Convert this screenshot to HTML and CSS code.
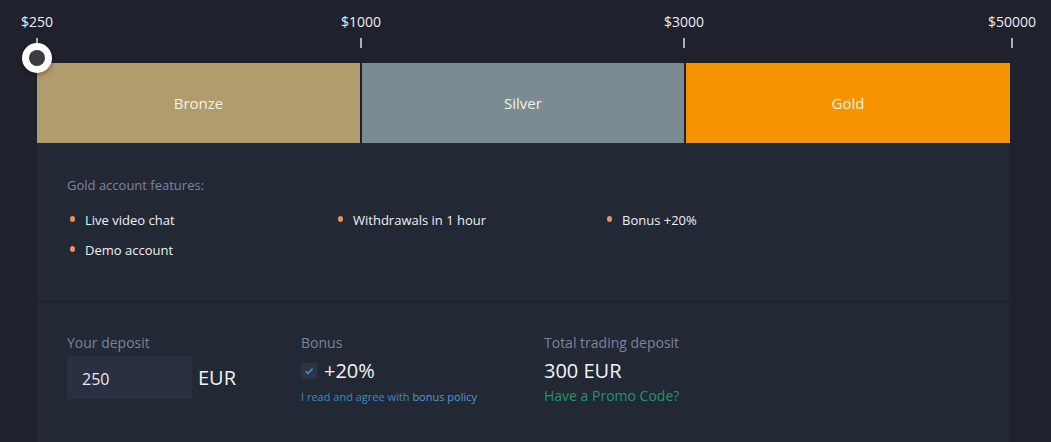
FILE: index.html
```html
<!DOCTYPE html>
<html lang="en">
<head>
    <meta charset="UTF-8">
    <meta name="viewport" content="width=device-width, initial-scale=1.0">
    <title>Account types</title>
    <link rel="stylesheet" href="styles.css">
</head>
<body>
    <div class="wrapper">
        <div class="scale">
            <div class="mark"><span class="mark-label">$250</span><span class="tick"></span></div>
            <div class="mark mark-1000"><span class="mark-label">$1000</span><span class="tick"></span></div>
            <div class="mark mark-3000"><span class="mark-label">$3000</span><span class="tick"></span></div>
            <div class="mark mark-50000"><span class="mark-label">$50000</span><span class="tick"></span></div>
        </div>

        <div class="tiers">
            <div class="knob"></div>
            <div class="tier tier-bronze">Bronze</div>
            <div class="tier tier-silver">Silver</div>
            <div class="tier tier-gold">Gold</div>
        </div>

        <div class="panel">
            <div class="features">
                <div class="features-title">Gold account features:</div>
                <ul class="feature-list">
                    <li>Live video chat</li>
                    <li>Withdrawals in 1 hour</li>
                    <li>Bonus +20%</li>
                    <li>Demo account</li>
                </ul>
            </div>

            <div class="deposit">
                <div class="deposit-col col-amount">
                    <div class="field-label">Your deposit</div>
                    <div class="amount-row">
                        <input type="text" class="amount-input" value="250">
                        <span class="currency">EUR</span>
                    </div>
                </div>
                <div class="deposit-col col-bonus">
                    <div class="field-label">Bonus</div>
                    <div class="bonus-row">
                        <span class="checkbox">
                            <svg width="10" height="8" viewBox="0 0 10 8"><path d="M1.5 4.2 L4 6.4 L8.6 1.6" fill="none" stroke="#3d8fcf" stroke-width="1.6"/></svg>
                        </span>
                        <span class="big-value">+20%</span>
                    </div>
                    <div class="policy">I read and agree with <a href="#">bonus policy</a></div>
                </div>
                <div class="deposit-col col-total">
                    <div class="field-label">Total trading deposit</div>
                    <div class="big-value total-value">300 EUR</div>
                    <a href="#" class="promo">Have a Promo Code?</a>
                </div>
            </div>
        </div>
    </div>
</body>
</html>
```

FILE: styles.css
```css
body {
    margin: 0;
    background-color: #1f222d;
    font-family: 'Open Sans', 'Liberation Sans', sans-serif;
    color: #e9ebf0;
}

.wrapper {
    width: 973px;
    margin-left: 37px;
}

.scale {
    display: flex;
    margin-left: -30px;
    height: 63px;
}

.mark {
    flex: none;
    width: 60px;
    display: flex;
    flex-direction: column;
    align-items: center;
}

.mark-1000 {
    margin-left: 264px;
}

.mark-3000 {
    margin-left: 263px;
}

.mark-50000 {
    margin-left: 268px;
}

.mark-label {
    margin-top: 12px;
    font-size: 14px;
    line-height: 20px;
    color: #eceef3;
}

.tick {
    margin-top: 6px;
    width: 2px;
    height: 10px;
    background-color: #a9aeb8;
}

.tiers {
    position: relative;
    display: flex;
    gap: 2px;
    height: 80px;
    background-color: #1f222d;
}

.tier {
    display: flex;
    align-items: center;
    justify-content: center;
    font-size: 15px;
    color: #f6f1e4;
}

.tier-bronze {
    width: 323px;
    background-color: #b09c6c;
}

.tier-silver {
    width: 322px;
    background-color: #7a8c91;
}

.tier-gold {
    flex: 1;
    background-color: #f59300;
}

.knob {
    position: absolute;
    left: -15px;
    top: -20px;
    width: 30px;
    height: 30px;
    border-radius: 50%;
    background-color: #ffffff;
    box-shadow: 0 2px 5px rgba(0, 0, 0, 0.35);
    display: flex;
    align-items: center;
    justify-content: center;
}

.knob::after {
    content: '';
    width: 16px;
    height: 16px;
    border-radius: 50%;
    background-color: #393c43;
}

.panel {
    background-color: #232835;
    height: 299px;
}

.features {
    padding: 33px 30px 0 30px;
    height: 124px;
    border-bottom: 2px solid #1f232d;
}

.features-title {
    font-size: 13px;
    line-height: 18px;
    color: #7f859c;
}

.feature-list {
    list-style: none;
    margin: 17px 0 0 0;
    padding: 0;
    display: grid;
    grid-template-columns: 268px 269px 200px;
    grid-auto-rows: 30px;
}

.feature-list li {
    position: relative;
    padding-left: 18px;
    font-size: 13px;
    line-height: 18px;
    color: #eef0f4;
}

.feature-list li::before {
    content: '';
    position: absolute;
    left: 3px;
    top: 5px;
    width: 5px;
    height: 6px;
    border-radius: 50%;
    background-color: #ee915c;
}

.deposit {
    display: flex;
    padding: 31px 30px 0 30px;
}

.deposit-col {
    display: flex;
    flex-direction: column;
}

.col-amount {
    width: 234px;
}

.col-bonus {
    width: 243px;
}

.field-label {
    font-size: 14px;
    line-height: 20px;
    color: #7d8399;
}

.amount-row {
    display: flex;
    align-items: center;
    margin-top: 3px;
}

.amount-input {
    width: 125px;
    height: 43px;
    box-sizing: border-box;
    border: none;
    outline: none;
    background-color: #2b2f42;
    padding: 2px 0 0 15px;
    font-family: 'Open Sans', 'Liberation Sans', sans-serif;
    font-size: 16px;
    color: #e9ebf0;
}

.currency {
    margin-left: 6px;
    font-size: 20px;
    color: #f2f3f6;
}

.bonus-row {
    display: flex;
    align-items: center;
    margin-top: 4px;
    height: 28px;
}

.checkbox {
    width: 16px;
    height: 16px;
    border-radius: 2px;
    background-color: #2c3447;
    display: flex;
    align-items: center;
    justify-content: center;
    margin-right: 7px;
}

.big-value {
    font-size: 20px;
    line-height: 28px;
    color: #f3f4f7;
}

.policy {
    margin-top: 4px;
    font-size: 11px;
    color: #3b8bc2;
}

.policy a {
    color: #4a9cd6;
    text-decoration: none;
}

.total-value {
    margin-top: 4px;
}

.promo {
    margin-top: 1px;
    font-size: 14px;
    color: #25946c;
    text-decoration: none;
}
```
